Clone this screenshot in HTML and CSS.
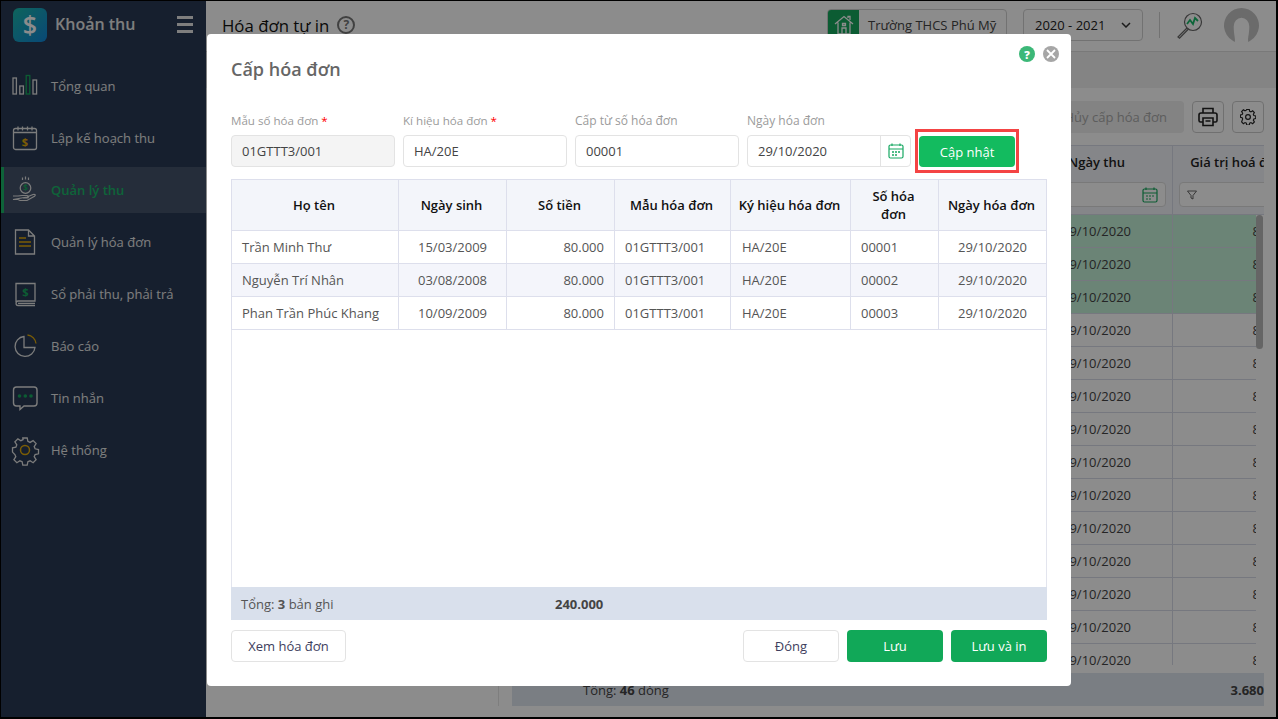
FILE: index.html
```html
<!DOCTYPE html>
<html lang="vi">
<head>
<meta charset="utf-8">
<title>Cấp hóa đơn</title>
<link rel="stylesheet" href="styles.css">
</head>
<body>
<div class="frame">
  <aside class="sidebar">
    <div class="brand">
      <span class="logo">$</span>
      <span class="brand-name">Khoản thu</span>
      <span class="burger"><i></i><i></i><i></i></span>
    </div>
    <nav class="nav">
      <a class="nav-item">
        <svg class="nav-icon" viewBox="0 0 26 26" fill="none" stroke="#e2e2e2" stroke-width="1.3"><rect x="1" y="5" width="3.4" height="16"/><rect x="7.8" y="13" width="3.6" height="8"/><rect x="14.2" y="2.5" width="3.6" height="18.5" stroke="#16a85e"/><rect x="21" y="7" width="3.6" height="14"/></svg>
        <span>Tổng quan</span>
      </a>
      <a class="nav-item">
        <svg class="nav-icon" viewBox="0 0 26 26" fill="none" stroke="#e2e2e2" stroke-width="1.3"><rect x="1.5" y="3.5" width="23" height="21" rx="2"/><path d="M1.500 7.500h23M6 1.500v4M10.500 1.500v4M15.500 1.500v4M20 1.500v4"/><text x="13" y="20.500" class="icon-dollar gold-fill">$</text></svg>
        <span>Lập kế hoạch thu</span>
      </a>
      <a class="nav-item active">
        <svg class="nav-icon" viewBox="0 0 26 26" fill="none" stroke="#e2e2e2" stroke-width="1.2"><circle cx="13.500" cy="11" r="5.300"/><path d="M13.500-.5v3M10.500.5v2.500M16.500.5v2.500"/><path d="M1 19h5l4-.5h5c2 0 2 2.500 0 2.500h-4M15 20l6-2.500c2-.5 3 .5 1.500 1.800L15 23.500H8l-2-1H1z"/><text x="13.500" y="14" class="icon-dollar-sm green-fill">$</text></svg>
        <span>Quản lý thu</span>
      </a>
      <a class="nav-item">
        <svg class="nav-icon" viewBox="0 0 26 26" fill="none" stroke="#e2e2e2" stroke-width="1.3"><path d="M3.500 1h13l6 6v18h-19zM16.500 1v6h6"/><path d="M7 9h7M7 13h12M7 17h12" stroke="#e0a90a" stroke-width="1.500"/></svg>
        <span>Quản lý hóa đơn</span>
      </a>
      <a class="nav-item">
        <svg class="nav-icon" viewBox="0 0 26 26" fill="none" stroke="#e2e2e2" stroke-width="1.3"><path d="M4 21V2.500h19V20H6c-2.600 0-2.600 4.500 0 4.500h17M6 22.300h17"/><text x="13.500" y="15" class="icon-dollar green-fill">$</text></svg>
        <span>Sổ phải thu, phải trả</span>
      </a>
      <a class="nav-item">
        <svg class="nav-icon" viewBox="0 0 26 26" fill="none" stroke="#e2e2e2" stroke-width="1.300"><path d="M12 3.500a10 10 0 1 0 11 11H12z"/><path d="M15.500 2a10 10 0 0 1 8.500 8.500" stroke="#e0a90a"/></svg>
        <span>Báo cáo</span>
      </a>
      <a class="nav-item">
        <svg class="nav-icon" viewBox="0 0 26 26" fill="none" stroke="#e2e2e2" stroke-width="1.400"><path d="M4.500 2h17.500a3 3 0 0 1 3 3v13a3 3 0 0 1-3 3H12l-4 3.500V21H4.500a3 3 0 0 1-3-3V5a3 3 0 0 1 3-3z"/><g fill="#16a85e" stroke="none"><circle cx="7.500" cy="11" r="1.800"/><circle cx="13.300" cy="11" r="1.800"/><circle cx="19" cy="11" r="1.800"/></g></svg>
        <span>Tin nhắn</span>
      </a>
      <a class="nav-item">
        <svg class="nav-icon" viewBox="0 0 26 26" fill="none" stroke="#e2e2e2" stroke-width="1.300"><path d="M10.800 1h4.400l.7 3.400 2.200 1 3-1.800 3 3-1.900 3 .9 2.200 3.400.700v4.300l-3.400.7-.9 2.200 1.900 3-3 3-3-1.900-2.200.9-.7 3.400h-4.400l-.7-3.400-2.200-.9-3 1.900-3-3 1.900-3-.9-2.200L.5 15.100v-4.300l3.400-.7.900-2.200-1.900-3 3-3 3 1.800 2.200-1z"/><circle cx="13" cy="13" r="4.500" stroke="#e0a90a" stroke-width="1.500"/></svg>
        <span>Hệ thống</span>
      </a>
    </nav>
  </aside>

  <main class="main">
    <header class="topbar">
      <h1 class="page-title">Hóa đơn tự in</h1>
      <span class="help-outline">?</span>
      <div class="topbar-right">
        <div class="school">
          <span class="school-icon">
            <svg viewBox="0 0 20 20" width="20" height="20" fill="none" stroke="#fff" stroke-width="1.300"><path d="M1 9l9-7.500L19 9M4 7.500V19h12V7.500M14 3V1.500h2v3.500M8 19v-6h4v6M8.500 8.500h3v2h-3z"/></svg>
          </span>
          <span class="school-name">Trường THCS Phú Mỹ</span>
        </div>
        <div class="year">
          <span>2020 - 2021</span>
          <svg viewBox="0 0 10 6" width="10" height="6" fill="none" stroke="#333" stroke-width="1.500"><path d="M1 1l4 4 4-4"/></svg>
        </div>
        <span class="vline"></span>
        <svg class="search-chart" viewBox="0 0 27 27" width="27" height="27" fill="none"><circle cx="17" cy="10" r="8.500" stroke="#666" stroke-width="1.200"/><path d="M11 12l3-4 3 4 2-6 3 3" stroke="#19b869" stroke-width="1.800"/><path d="M11 16L2 25l1.500 1.200L12.500 17" stroke="#666" stroke-width="1.200"/></svg>
        <svg class="avatar" viewBox="0 0 36 36" width="35" height="35"><path d="M8 33A18 18 0 1 1 28 33A18 18 0 0 1 25 35C24 31 26 28 26 19A8 9 0 0 0 10 19C10 28 12 31 11 35A18 18 0 0 1 8 33z" fill="#c4c4c4"/></svg>
      </div>
    </header>
    <div class="band"></div>
    <div class="workspace">
      <div class="tree-panel"></div>
      <section class="list-panel">
        <div class="toolbar">
          <span class="btn-muted">Hủy cấp hóa đơn</span>
          <span class="tool-btn">
            <svg viewBox="0 0 20 20" width="20" height="20" fill="none" stroke="#222" stroke-width="1.600"><path d="M5 6V1.500h10V6M5 15H2.500A1.500 1.500 0 0 1 1 13.500V8a2 2 0 0 1 2-2h14a2 2 0 0 1 2 2v5.500a1.500 1.500 0 0 1-1.500 1.500H15"/><path d="M5 11h10v7.500H5zM7.500 14h5"/></svg>
          </span>
          <span class="tool-btn">
            <svg viewBox="0 0 20 20" width="16" height="16" fill="none" stroke="#222" stroke-width="1.500"><path d="M8.300 1h3.400l.5 2.500 1.700.8 2.200-1.400 2.300 2.400-1.400 2.200.7 1.600 2.500.6v3.300l-2.500.6-.7 1.600 1.400 2.200-2.300 2.400-2.200-1.400-1.700.7-.5 2.500H8.300l-.5-2.500-1.700-.7-2.200 1.400-2.300-2.400L3 13.700l-.7-1.600L0 11.500V8.300l2.300-.6.700-1.600L1.600 3.900 3.900 1.500l2.200 1.400 1.700-.8z" transform="translate(.5 -.5) scale(.95)"/><circle cx="10" cy="10" r="3"/></svg>
          </span>
        </div>
        <div class="grid-wrap">
          <table class="bg-grid">
            <colgroup><col class="bg-c1"><col class="bg-c2"><col class="bg-c3"></colgroup>
            <thead>
              <tr>
                <th></th>
                <th><span class="bg-head">Ngày thu</span>
                  <span class="bg-filter bg-filter-date">
                    <svg viewBox="0 0 16 16" width="16" height="16" fill="none" stroke="#16a85e" stroke-width="1.200"><rect x="1" y="2" width="14" height="13" rx="1.500"/><path d="M1 6h14M4 .5V3M12 .5V3M4 9h2M7 9h2M10 9h2M4 12h2M7 12h2"/></svg>
                  </span>
                </th>
                <th><span class="bg-head">Giá trị hoá đơn</span>
                  <span class="bg-filter">
                    <svg viewBox="0 0 10 10" width="10" height="10" fill="none" stroke="#555" stroke-width=".9"><path d="M.5 1h9L6 5.500V9L4 8V5.500z"/></svg>
                  </span>
                </th>
              </tr>
            </thead>
            <tbody>
              <tr class="paid"><td></td><td>29/10/2020</td><td>80.000</td></tr>
              <tr class="paid"><td></td><td>29/10/2020</td><td>80.000</td></tr>
              <tr class="paid"><td></td><td>29/10/2020</td><td>80.000</td></tr>
              <tr><td></td><td>29/10/2020</td><td>80.000</td></tr>
              <tr><td></td><td>29/10/2020</td><td>80.000</td></tr>
              <tr><td></td><td>29/10/2020</td><td>80.000</td></tr>
              <tr><td></td><td>29/10/2020</td><td>80.000</td></tr>
              <tr><td></td><td>29/10/2020</td><td>80.000</td></tr>
              <tr><td></td><td>29/10/2020</td><td>80.000</td></tr>
              <tr><td></td><td>29/10/2020</td><td>80.000</td></tr>
              <tr><td></td><td>29/10/2020</td><td>80.000</td></tr>
              <tr><td></td><td>29/10/2020</td><td>80.000</td></tr>
              <tr><td></td><td>29/10/2020</td><td>80.000</td></tr>
              <tr><td></td><td>29/10/2020</td><td>80.000</td></tr>
              <tr><td></td><td>29/10/2020</td><td>80.000</td></tr>
            </tbody>
          </table>
          <span class="scroll-gutter"><span class="scroll-thumb"></span></span>
        </div>
        <div class="bg-summary">
          <span>Tổng: <b>46</b> dòng</span>
          <b class="bg-total">3.680</b>
        </div>
      </section>
    </div>
  </main>

  <div class="overlay">
    <div class="modal">
      <div class="modal-actions">
        <span class="dot dot-help">?</span>
        <span class="dot dot-close">
          <svg viewBox="0 0 10 10" width="10" height="10" fill="none" stroke="#fff" stroke-width="1.800"><path d="M1 1l8 8M9 1l-8 8"/></svg>
        </span>
      </div>
      <h2 class="modal-title">Cấp hóa đơn</h2>
      <div class="form-row">
        <label class="field">
          <span class="field-label field-req">Mẫu số hóa đơn <em>*</em></span>
          <span class="input input-disabled">01GTTT3/001</span>
        </label>
        <label class="field">
          <span class="field-label field-req">Kí hiệu hóa đơn <em>*</em></span>
          <span class="input">HA/20E</span>
        </label>
        <label class="field">
          <span class="field-label">Cấp từ số hóa đơn</span>
          <span class="input">00001</span>
        </label>
        <label class="field">
          <span class="field-label">Ngày hóa đơn</span>
          <span class="input input-date">
            <span class="input-date-value">29/10/2020</span>
            <span class="input-addon">
              <svg viewBox="0 0 16 16" width="16" height="16" fill="none" stroke="#17a862" stroke-width="1.200"><rect x="1" y="2" width="14" height="13" rx="1.500"/><path d="M1 6h14M4 .5V3M12 .5V3" /><path d="M4 9h2M7 9h2M10 9h2M4 12h2M7 12h2" stroke-width="1.500"/></svg>
            </span>
          </span>
        </label>
        <div class="highlight">
          <button class="btn btn-update" type="button">Cập nhật</button>
        </div>
      </div>
      <div class="sheet">
        <table class="sheet-table">
          <colgroup>
            <col class="c-name"><col class="c-dob"><col class="c-amt"><col class="c-tpl"><col class="c-sym"><col class="c-no"><col class="c-date">
          </colgroup>
          <thead>
            <tr>
              <th>Họ tên</th><th>Ngày sinh</th><th>Số tiền</th><th>Mẫu hóa đơn</th><th>Ký hiệu hóa đơn</th><th class="th-wrap">Số hóa đơn</th><th>Ngày hóa đơn</th>
            </tr>
          </thead>
          <tbody>
            <tr>
              <td>Trần Minh Thư</td><td class="center">15/03/2009</td><td class="right">80.000</td><td>01GTTT3/001</td><td class="sym">HA/20E</td><td>00001</td><td class="center">29/10/2020</td>
            </tr>
            <tr>
              <td>Nguyễn Trí Nhân</td><td class="center">03/08/2008</td><td class="right">80.000</td><td>01GTTT3/001</td><td class="sym">HA/20E</td><td>00002</td><td class="center">29/10/2020</td>
            </tr>
            <tr>
              <td>Phan Trần Phúc Khang</td><td class="center">10/09/2009</td><td class="right">80.000</td><td>01GTTT3/001</td><td class="sym">HA/20E</td><td>00003</td><td class="center">29/10/2020</td>
            </tr>
          </tbody>
        </table>
      </div>
      <div class="sheet-summary">
        <span class="sum-label">Tổng: <b>3</b> bản ghi</span>
        <b class="sum-value">240.000</b>
      </div>
      <div class="modal-footer">
        <button class="btn btn-plain btn-view" type="button">Xem hóa đơn</button>
        <span class="spacer"></span>
        <button class="btn btn-plain" type="button">Đóng</button>
        <button class="btn btn-primary" type="button">Lưu</button>
        <button class="btn btn-primary" type="button">Lưu và in</button>
      </div>
    </div>
  </div>
</div>
</body>
</html>
```

FILE: styles.css
```css
* { box-sizing: border-box; }
html, body { margin: 0; height: 100%; overflow: hidden; background: #000; }
body { font-family: "Open Sans", "Liberation Sans", sans-serif; font-size: 13px; color: #333; }

.frame {
  position: relative;
  display: flex;
  width: 1278px;
  height: 719px;
  border-style: solid;
  border-color: #000;
  border-width: 1px 2px 2px 1px;
  overflow: hidden;
}

/* sidebar */
.sidebar { flex: 0 0 205px; background: #293a54; color: #e6e6e6; }
.brand { display: flex; align-items: center; height: 48px; padding: 0 13px 2px 12px; margin-bottom: 14px; }
.logo {
  width: 34px; height: 34px; margin-top: 2px; border-radius: 6px;
  background: linear-gradient(135deg, #1bb7a8, #1184d8);
  color: #fff; font-size: 25px; font-weight: 600; line-height: 33px; text-align: center;
}
.brand-name { margin-left: 8px; font-size: 16px; font-weight: 600; flex: 1; }
.burger { display: flex; flex-direction: column; gap: 4px; width: 16px; }
.burger i { display: block; height: 3px; background: #e6e6e6; }
.nav { display: flex; flex-direction: column; gap: 6px; }
.nav-item { display: flex; align-items: center; gap: 13px; height: 46px; padding-left: 11px; }
.nav-icon { width: 26px; height: 26px; flex: none; overflow: visible; }
.nav-item.active { background: #44536b; box-shadow: inset 3px 0 0 #1ab768; color: #1ab768; font-weight: 600; }
.icon-dollar { font-size: 11px; font-weight: 700; text-anchor: middle; stroke: none; }
.icon-dollar-sm { font-size: 8px; font-weight: 700; text-anchor: middle; stroke: none; }
.gold-fill { fill: #e0a90a; }
.green-fill { fill: #16a85e; }

/* main (under overlay) */
.main { flex: 1; display: flex; flex-direction: column; background: #fff; min-width: 0; }
.topbar { display: flex; align-items: center; height: 51px; padding: 0 17px 2px 16px; border-bottom: 1px solid #ddd; flex: none; }
.page-title { margin: 0; font-size: 16.8px; font-weight: 500; color: #111; }
.help-outline {
  width: 18px; height: 18px; margin-left: 8px; border: 2px solid #777; border-radius: 50%;
  color: #777; font-size: 12px; font-weight: 700; line-height: 14px; text-align: center;
}
.topbar-right { display: flex; align-items: center; margin-left: auto; }
.school { display: flex; align-items: center; width: 180px; height: 32px; border: 1px solid #d0d0d0; border-radius: 4px; overflow: hidden; }
.school-icon { display: flex; align-items: center; justify-content: center; width: 31px; height: 32px; background: #16a85e; flex: none; }
.school-name { margin-left: 9px; color: #444; white-space: nowrap; }
.year { display: flex; align-items: center; justify-content: space-between; width: 120px; height: 32px; margin-left: 16px; padding: 0 11px; border: 1px solid #d0d0d0; border-radius: 4px; color: #222; }
.vline { width: 1px; height: 26px; margin: 0 16px; background: #d0d0d0; }
.search-chart { flex: none; }
.avatar { margin-left: 21px; flex: none; }
.band { height: 36px; flex: none; background: #f0f0f0; }
.workspace { flex: 1; display: flex; min-height: 0; background: #fff; }
.tree-panel { flex: 0 0 293px; border-right: 1px solid #e6e6e6; margin-bottom: 11px; }
.list-panel { flex: 1; min-width: 0; display: flex; flex-direction: column; padding: 13px 12px 11px 13px; }
.toolbar { display: flex; justify-content: flex-end; gap: 8px; height: 32px; flex: none; }
.btn-muted { display: flex; align-items: center; padding: 0 17px; border-radius: 4px; background: #eeeeee; color: #aaa; }
.tool-btn { display: flex; align-items: center; justify-content: center; width: 32px; height: 32px; border: 1px solid #ccc; border-radius: 4px; }
.grid-wrap { position: relative; margin-top: 12px; height: 520px; flex: none; overflow: hidden; }
.bg-grid { border-collapse: collapse; table-layout: fixed; width: 789px; }
.bg-c1 { width: 508px; } .bg-c2 { width: 152px; } .bg-c3 { width: 129px; }
.bg-grid th { height: 69px; padding: 5px 6px 0; background: #f2f4f9; border: 1px solid #d8dbe8; font-weight: 600; color: #222; vertical-align: top; }
.bg-head { display: block; height: 31px; line-height: 22px; white-space: nowrap; }
.bg-filter { display: flex; align-items: center; height: 25px; padding: 0 7px; background: #fff; border: 1px solid #ddd; border-radius: 4px; }
.bg-filter-date { justify-content: flex-end; }
.bg-grid td { height: 33px; padding: 0 8px; border: 1px solid #d8dbe8; text-align: right; color: #444; }
.bg-grid td:nth-child(2) { text-align: center; }
.paid td { background: #c3f0d8; }
.scroll-gutter { position: absolute; right: 0; top: 70px; bottom: 0; width: 8px; background: #fff; }
.scroll-thumb { display: block; width: 7px; height: 134px; border-radius: 4px; background: #b8b8b8; }
.bg-summary { display: flex; align-items: center; justify-content: space-between; height: 33px; margin-top: 8px; padding-left: 71px; background: #dfe5ef; color: #444; flex: none; }

/* overlay + modal */
.overlay { position: absolute; inset: 0; display: flex; align-items: flex-start; padding: 33px 0 0 206px; background: rgba(0, 0, 0, .45); }
.modal { position: relative; display: flex; flex-direction: column; width: 864px; height: 652px; padding: 0 24px; background: #fff; border-radius: 4px; }
.modal-actions { position: absolute; top: 12px; right: 12px; display: flex; gap: 8px; }
.dot { display: flex; align-items: center; justify-content: center; width: 16px; height: 16px; border-radius: 50%; color: #fff; font-size: 11px; font-weight: 800; }
.dot-help { background: #3cb878; }
.dot-close { background: #a6a6a6; }
.modal-title { margin: 23px 0 0; height: 25px; font-size: 18px; line-height: 25px; font-weight: 600; color: #666; }
.form-row { display: flex; gap: 8px; margin-top: 30px; }
.field { display: flex; flex-direction: column; width: 164px; }
.field-label { height: 23px; padding-top: 1px; font-size: 12px; line-height: 16px; color: #9b9b9b; white-space: nowrap; }
.field-req { font-size: 11.6px; }
.field-label em { color: #f00; font-style: normal; }
.input { display: flex; align-items: center; height: 32px; padding: 0 10px; background: #fff; border: 1px solid #e3e3e3; border-radius: 4px; color: #444; }
.input-disabled { background: #f4f4f4; }
.input-date { padding: 0; }
.input-date-value { flex: 1; padding-left: 10px; }
.input-addon { display: flex; align-items: center; justify-content: center; width: 30px; height: 30px; border-left: 1px solid #e3e3e3; }
.highlight { align-self: flex-start; margin: 17px 0 0 -4px; padding-top: 1px; border: 3px solid #f44444; width: 104px; height: 44px; display: flex; align-items: center; justify-content: center; }
.btn { height: 32px; border-radius: 4px; border: 1px solid transparent; font: inherit; cursor: pointer; }
.btn-update { width: 96px; height: 31px; background: #13bb5f; color: #fff; }
.btn-primary { width: 96px; background: #11a858; color: #fff; }
.btn-plain { width: 96px; background: #fff; border-color: #e3e3e3; color: #3e3e5e; }
.btn-view { width: 115px; }
.sheet { height: 408px; margin-top: 6px; border: 1px solid #e3e5ee; border-bottom: 0; flex: none; }
.sheet-table { border-collapse: collapse; table-layout: fixed; width: 815px; margin: -1px 0 0 -1px; }
.c-name { width: 167px; } .c-dob { width: 108px; } .c-amt { width: 108px; } .c-tpl { width: 116px; }
.c-sym { width: 120px; } .c-no { width: 88px; } .c-date { width: 108px; }
.sheet-table th { height: 51px; padding: 0 6px 0 4px; background: #f3f5fa; border: 1px solid #dddfec; font-weight: 600; color: #111; line-height: 18px; }
.sheet-table .th-wrap { padding: 0 13px 0 11px; }
.sheet-table td { height: 33px; padding: 0 10px; border: 1px solid #dddfec; color: #555; white-space: nowrap; }
.sheet-table tbody tr:nth-child(2) td { background: #f4f5fb; }
.sheet-table .center { text-align: center; }
.sheet-table .right { text-align: right; }
.sheet-table .sym { padding-left: 11px; }
.sheet-summary { display: flex; align-items: center; height: 33px; padding-left: 10px; background: #d9e0ec; color: #555; flex: none; }
.sum-label { width: 314px; }
.sum-value { color: #444; }
.modal-footer { display: flex; gap: 8px; margin-top: 10px; }
.spacer { flex: 1; }
```
